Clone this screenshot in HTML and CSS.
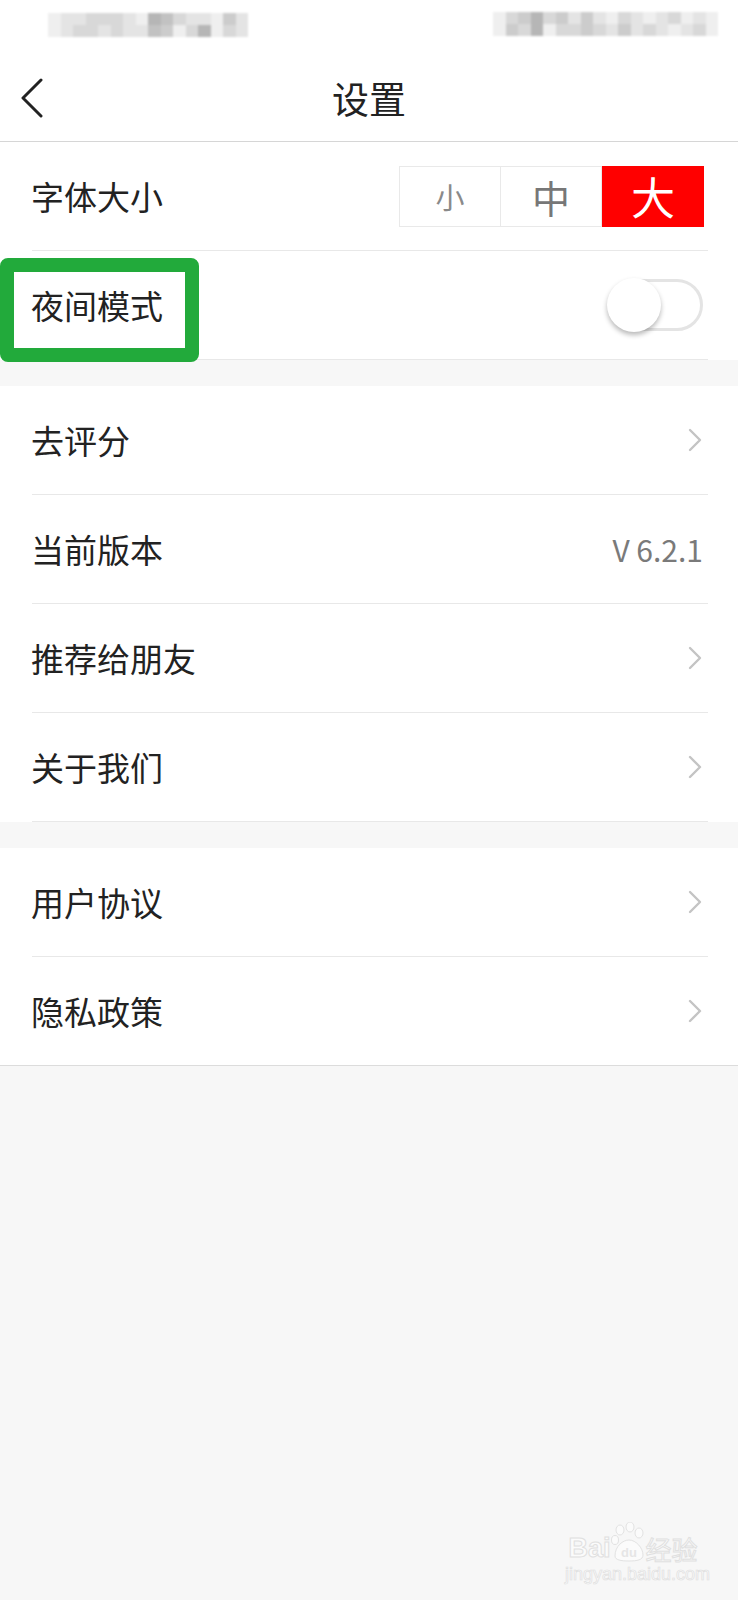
FILE: index.html
```html
<!DOCTYPE html>
<html lang="zh-CN">
<head>
    <meta charset="UTF-8">
    <meta name="viewport" content="width=device-width, initial-scale=1.0">
    <title>设置</title>
    <link rel="stylesheet" href="styles.css">
</head>
<body>
    <div class="page">
        <div class="statusbar">
            <div class="blur blur-left">
                <span class="c6"></span><span class="c6"></span>
                <span class="c1"></span><span class="c1"></span>
                <span class="c1"></span><span class="c2"></span>
                <span class="c2"></span><span class="c2"></span>
                <span class="c2"></span><span class="c1"></span>
                <span class="c2"></span><span class="c2"></span>
                <span class="c1"></span><span class="c1"></span>
                <span class="c6"></span><span class="c1"></span>
                <span class="c4"></span><span class="c5"></span>
                <span class="c5"></span><span class="c3"></span>
                <span class="c2"></span><span class="c6"></span>
                <span class="c1"></span><span class="c2"></span>
                <span class="c1"></span><span class="c4"></span>
                <span class="c6"></span><span class="c6"></span>
                <span class="c3"></span><span class="c2"></span>
                <span class="c1"></span><span class="c1"></span>
            </div>
            <div class="blur blur-right">
                <span class="c6"></span><span class="c6"></span>
                <span class="c2"></span><span class="c3"></span>
                <span class="c3"></span><span class="c2"></span>
                <span class="c4"></span><span class="c4"></span>
                <span class="c2"></span><span class="c6"></span>
                <span class="c3"></span><span class="c2"></span>
                <span class="c1"></span><span class="c2"></span>
                <span class="c3"></span><span class="c3"></span>
                <span class="c1"></span><span class="c2"></span>
                <span class="c6"></span><span class="c1"></span>
                <span class="c2"></span><span class="c3"></span>
                <span class="c1"></span><span class="c1"></span>
                <span class="c6"></span><span class="c2"></span>
                <span class="c1"></span><span class="c1"></span>
                <span class="c2"></span><span class="c6"></span>
                <span class="c6"></span><span class="c1"></span>
                <span class="c1"></span><span class="c2"></span>
                <span class="c6"></span><span class="c6"></span>
            </div>
        </div>

        <div class="navbar">
            <div class="back">
                <svg width="24" height="40" viewBox="0 0 24 40">
                    <polyline points="21,2 3,20 21,38" fill="none" stroke="#222" stroke-width="3" stroke-linecap="round" stroke-linejoin="round"/>
                </svg>
            </div>
            <div class="title">设置</div>
            <div></div>
        </div>

        <div class="group">
            <div class="row">
                <span class="label">字体大小</span>
                <div class="segment">
                    <span class="seg seg-small">小</span>
                    <span class="seg seg-mid">中</span>
                    <span class="seg seg-large active">大</span>
                </div>
            </div>
            <div class="row">
                <span class="label">夜间模式</span>
                <div class="switch"><span class="knob"></span></div>
            </div>
        </div>

        <div class="group">
            <div class="row">
                <span class="label">去评分</span>
                <svg class="chevron" width="14" height="24" viewBox="0 0 14 24"><polyline points="2,2 12,12 2,22" fill="none" stroke="#c4c4c4" stroke-width="2.4" stroke-linecap="round" stroke-linejoin="round"/></svg>
            </div>
            <div class="row">
                <span class="label">当前版本</span>
                <span class="version">V 6.2.1</span>
            </div>
            <div class="row">
                <span class="label">推荐给朋友</span>
                <svg class="chevron" width="14" height="24" viewBox="0 0 14 24"><polyline points="2,2 12,12 2,22" fill="none" stroke="#c4c4c4" stroke-width="2.4" stroke-linecap="round" stroke-linejoin="round"/></svg>
            </div>
            <div class="row">
                <span class="label">关于我们</span>
                <svg class="chevron" width="14" height="24" viewBox="0 0 14 24"><polyline points="2,2 12,12 2,22" fill="none" stroke="#c4c4c4" stroke-width="2.4" stroke-linecap="round" stroke-linejoin="round"/></svg>
            </div>
        </div>

        <div class="group group-last">
            <div class="row">
                <span class="label">用户协议</span>
                <svg class="chevron" width="14" height="24" viewBox="0 0 14 24"><polyline points="2,2 12,12 2,22" fill="none" stroke="#c4c4c4" stroke-width="2.4" stroke-linecap="round" stroke-linejoin="round"/></svg>
            </div>
            <div class="row">
                <span class="label">隐私政策</span>
                <svg class="chevron" width="14" height="24" viewBox="0 0 14 24"><polyline points="2,2 12,12 2,22" fill="none" stroke="#c4c4c4" stroke-width="2.4" stroke-linecap="round" stroke-linejoin="round"/></svg>
            </div>
        </div>

        <!-- annotation box drawn over the night mode row -->
        <div class="highlight"></div>

        <div class="watermark">
            <div class="wm-logo">
                <span>Bai</span>
                <span class="paw">
                    <svg width="34" height="40" viewBox="0 0 34 40">
                        <ellipse cx="9" cy="8" rx="4" ry="5" fill="#fbfbfb" stroke="#e2e2e2"/>
                        <ellipse cx="19" cy="5" rx="4" ry="5" fill="#fbfbfb" stroke="#e2e2e2"/>
                        <ellipse cx="28" cy="11" rx="4" ry="5" fill="#fbfbfb" stroke="#e2e2e2"/>
                        <ellipse cx="4" cy="18" rx="3.5" ry="4.5" fill="#fbfbfb" stroke="#e2e2e2"/>
                        <path d="M4 34 C4 24 12 18 18 18 C25 18 32 26 32 33 C32 38 26 39 18 39 C10 39 4 38 4 34 Z" fill="#fbfbfb" stroke="#e2e2e2"/>
                        <text x="18" y="35" font-family="Liberation Sans, sans-serif" font-size="13" font-weight="bold" text-anchor="middle" fill="#e6e6e6">du</text>
                    </svg>
                </span>
                <span class="wm-cn">经验</span>
            </div>
            <div class="wm-url">jingyan.baidu.com</div>
        </div>
    </div>
</body>
</html>
```

FILE: styles.css
```css
body {
    margin: 0;
    background-color: #f7f7f7;
    font-family: "Noto Sans CJK SC", "Noto Sans", sans-serif;
    color: #222;
}

.page {
    position: relative;
    min-height: 1600px;
}

/* status bar (blurred in the original) */
.statusbar {
    height: 52px;
    background-color: #fff;
    position: relative;
}

.blur {
    position: absolute;
    top: 13px;
    display: grid;
    grid-template-rows: 12px 12px;
    grid-auto-flow: column;
    grid-auto-columns: 12.5px;
    filter: blur(1px);
}

.blur-left {
    left: 48px;
}

.blur-right {
    left: 493px;
    top: 12px;
}

.blur span { display: block; }
.c1 { background-color: #e4e4e4; }
.c2 { background-color: #d8d8d8; }
.c3 { background-color: #cccccc; }
.c4 { background-color: #b6b6b6; }
.c5 { background-color: #c2c2c2; }
.c6 { background-color: #efefef; }

.navbar {
    height: 89px;
    background-color: #fff;
    border-bottom: 1px solid #d6d6d6;
    display: grid;
    grid-template-columns: 90px 1fr 90px;
    align-items: center;
}

.back {
    padding-left: 20px;
    display: flex;
    align-items: center;
    padding-top: 2px;
}

.title {
    text-align: center;
    font-size: 37px;
    color: #222;
    padding-top: 2px;
}

.group {
    background-color: #fff;
    margin-bottom: 26px;
}

.group-last {
    border-bottom: 1px solid #dcdcdc;
}

.row {
    height: 108px;
    margin: 0 30px 0 32px;
    padding-right: 4px;
    border-bottom: 1px solid #e8e8e8;
    display: flex;
    align-items: center;
    justify-content: space-between;
}

.group-last .row:last-child {
    border-bottom: none;
}

.label {
    font-size: 33px;
    color: #222;
    margin-left: -1px;
}

.segment {
    display: flex;
    height: 59px;
    border: 1px solid #e9e9e9;
}

.seg {
    width: 100px;
    display: flex;
    align-items: center;
    justify-content: center;
    border-left: 1px solid #e9e9e9;
    color: #7d7d7d;
}

.seg:first-child {
    border-left: none;
}

.seg-small {
    font-size: 29px;
    color: #8a8a8a;
}

.seg-mid {
    font-size: 38px;
    color: #777;
}

.seg-large {
    font-size: 44px;
}

.seg.active {
    background-color: #ff0000;
    color: #fff;
    width: 102px;
    margin: -1px -1px -1px 0;
    height: 61px;
}

.switch {
    width: 95px;
    height: 52px;
    box-sizing: border-box;
    border: 3px solid #e4e4e4;
    border-radius: 26px;
    background-color: #fff;
    display: flex;
    align-items: center;
    margin-right: 1px;
}

.knob {
    width: 54px;
    height: 54px;
    margin-left: -4px;
    border-radius: 50%;
    background-color: #fff;
    box-shadow: 0 3px 5px rgba(0, 0, 0, 0.28);
}

.chevron {
    margin-right: 2px;
}

.version {
    font-size: 30px;
    color: #7a7a7a;
    margin-right: 1px;
}

.highlight {
    position: absolute;
    left: 0;
    top: 258px;
    width: 199px;
    height: 104px;
    box-sizing: border-box;
    border: 14px solid #22aa3b;
    border-radius: 8px;
}

.watermark {
    position: absolute;
    left: 565px;
    top: 1522px;
    width: 136px;
    text-align: center;
}

.wm-logo {
    display: flex;
    align-items: flex-end;
    justify-content: center;
    font-family: "Liberation Sans", sans-serif;
    font-weight: bold;
    font-size: 27px;
    line-height: 1;
    color: #fbfbfb;
    -webkit-text-stroke: 1px #e0e0e0;
}

.paw {
    display: flex;
    margin: 0 1px 0 0;
}

.wm-cn {
    font-family: "Noto Sans CJK SC", sans-serif;
    font-size: 26px;
    font-weight: normal;
}

.wm-url {
    font-family: "Liberation Sans", sans-serif;
    font-size: 18px;
    color: #fbfbfb;
    -webkit-text-stroke: 0.7px #e0e0e0;
    margin-top: 2px;
}
```
